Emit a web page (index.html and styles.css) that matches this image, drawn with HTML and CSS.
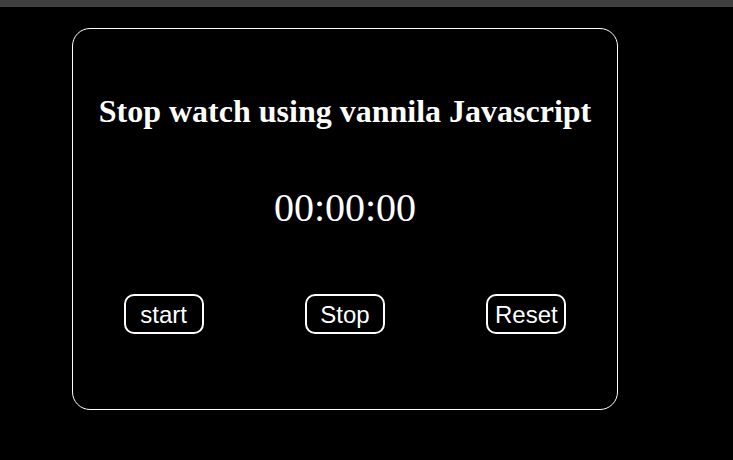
FILE: index.html
```html
<!DOCTYPE html>
<html>
<head>
<meta charset="utf-8">
<link rel="stylesheet" href="styles.css">
</head>
<body>
<div class="topbar"></div>
<div class="card">
  <h1 class="title">Stop watch using vannila Javascript</h1>
  <div class="time">00:00:00</div>
  <div class="buttons">
    <button class="btn">start</button>
    <button class="btn">Stop</button>
    <button class="btn">Reset</button>
  </div>
</div>
</body>
</html>
```
FILE: styles.css
```css
html, body {
  margin: 0;
  padding: 0;
  background: #000;
  color: #fff;
  font-family: "Liberation Serif", serif;
}
.topbar {
  height: 7px;
  background: #3f3f3f;
}
.card {
  box-sizing: border-box;
  width: 546px;
  height: 382px;
  margin: 21px 0 0 72px;
  border: 1px solid #fff;
  border-radius: 18px;
  display: flex;
  flex-direction: column;
  align-items: center;
}
.title {
  margin: 64px 0 0;
  font-size: 32px;
  font-weight: bold;
  line-height: 36px;
}
.time {
  margin-top: 56px;
  font-size: 40px;
  line-height: 46px;
}
.buttons {
  align-self: stretch;
  display: flex;
  justify-content: space-around;
  margin-top: 63px;
}
.btn {
  box-sizing: border-box;
  width: 80px;
  height: 40px;
  background: #000;
  color: #fff;
  border: 2px solid #fff;
  border-radius: 10px;
  font-family: "Liberation Sans", sans-serif;
  font-size: 24px;
  padding: 1px 0 0;
}
```
